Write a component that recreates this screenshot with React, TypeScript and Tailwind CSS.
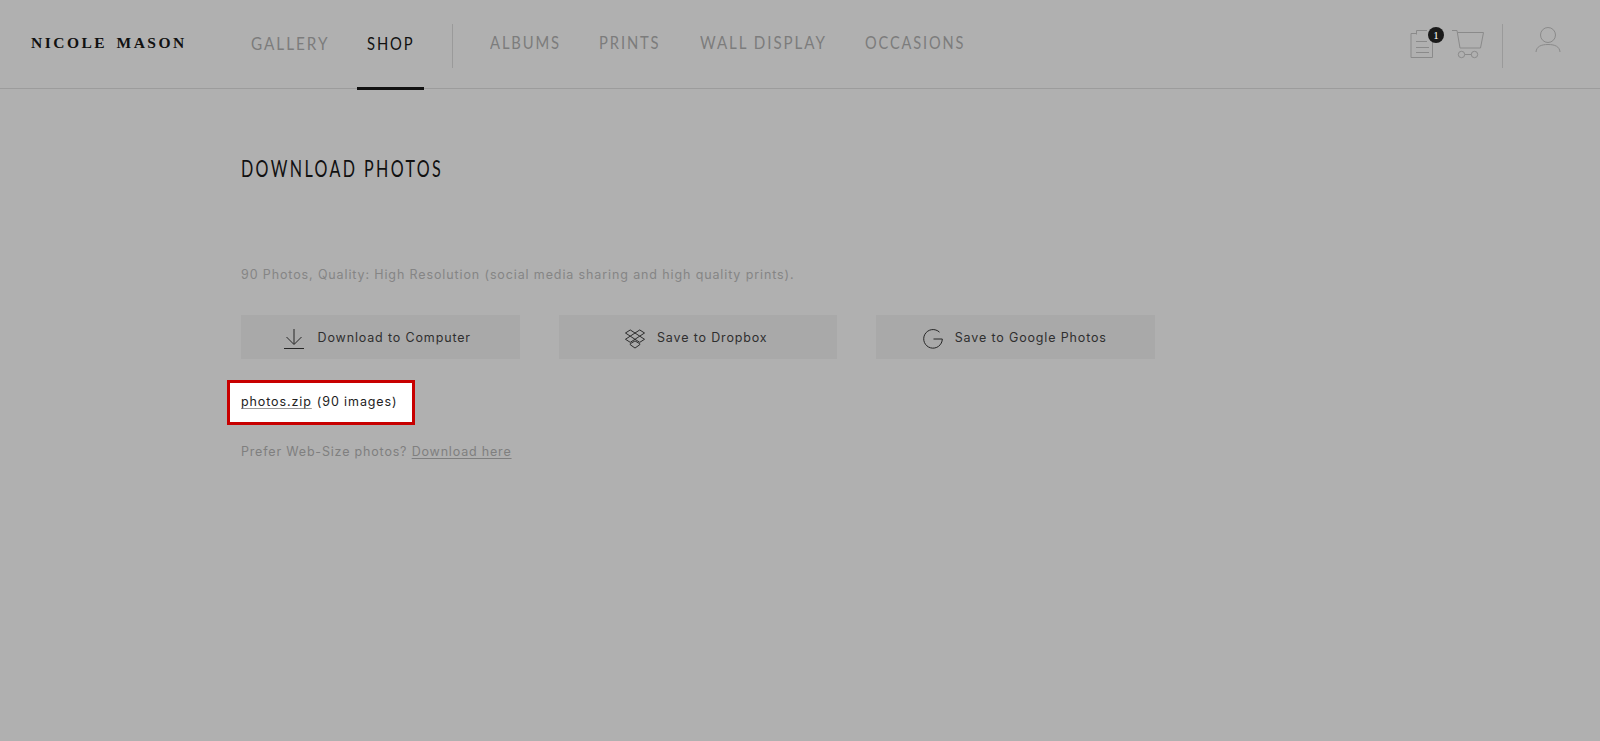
function DocIcon() {
  return (
    <svg width="24" height="30" viewBox="0 0 24 30" fill="none" stroke="#8a8a8a" strokeWidth="1" className="block">
      <path d="M6.500 5.500V1.500H17" />
      <path d="M6.500 4.500H1V28.500H22.500V12" />
      <path d="M6 12.500H17M6 18.500H19M6 23.500H19" />
    </svg>
  );
}

function CartIcon() {
  return (
    <svg width="34" height="30" viewBox="0 0 34 30" fill="none" stroke="#8a8a8a" strokeWidth="1" className="block">
      <path d="M1 1.500H6L9 19H29.500L32.500 3.500H6.500" />
      <circle cx="10.500" cy="25.500" r="3.200" />
      <circle cx="23.500" cy="25.500" r="3.200" />
      <path d="M13.700 25.500H20.300" />
    </svg>
  );
}

function UserIcon() {
  return (
    <svg width="26" height="26" viewBox="0 0 26 26" fill="none" stroke="#8a8a8a" strokeWidth="1" className="block">
      <circle cx="13" cy="8" r="7.500" />
      <path d="M1 25C1.500 19.500 6 17.500 13 17.500S24.500 19.500 25 25" />
    </svg>
  );
}

function DownloadIcon() {
  return (
    <svg width="20" height="22" viewBox="0 0 20 22" fill="none" stroke="#262626" strokeWidth="1" className="block">
      <path d="M10 1V16M2.500 9L10 16.500L17.500 9" />
      <path d="M0 20.500H20" />
    </svg>
  );
}

function DropboxIcon() {
  return (
    <svg width="20" height="20" viewBox="0 0 21 21" fill="none" stroke="#262626" strokeWidth="1" className="block">
      <path d="M5.500 1L10.500 4.200L5.500 7.500L0.500 4.200Z" />
      <path d="M15.500 1L20.500 4.200L15.500 7.500L10.500 4.200Z" />
      <path d="M5.500 7.500L10.500 10.800L5.500 14L0.500 10.800Z" />
      <path d="M15.500 7.500L20.500 10.800L15.500 14L10.500 10.800Z" />
      <path d="M5.500 15.500L10.500 12.500L15.500 15.500V16.500L10.500 20L5.500 16.500Z" />
    </svg>
  );
}

function GoogleIcon() {
  return (
    <svg width="20" height="20" viewBox="0 0 20 20" fill="none" stroke="#262626" strokeWidth="1" className="block">
      <path d="M16.500 3.200A9.300 9.300 0 1 0 19.300 10H10.500" />
    </svg>
  );
}

function SaveButton({ icon, label, cls }: { icon: React.ReactNode; label: string; cls: string }) {
  return (
    <button className={`flex h-11 w-[278.500px] items-center justify-center bg-[#a9a9a9] pt-[3px] text-[12.500px] tracking-[0.85px] text-[#2f2f2f] ${cls}`}>
      {icon}
      {label}
    </button>
  );
}

// no condensed face installed, so the caps get squeezed horizontally
function NavLabel({ label, cls, active }: { label: string; cls: string; active?: boolean }) {
  return (
    <span className={`block origin-left font-['Lato',sans-serif] text-[18px] tracking-[2.3px] whitespace-nowrap ${active ? "text-[#111]" : "text-[#7c7c7c]"} ${cls}`}>
      {label}
    </span>
  );
}

export default function App() {
  return (
    <div className="min-h-[741px] bg-[#b0b0b0] font-['Inter',sans-serif] antialiased">
      {/* Header */}
      <header className="flex h-[89px] items-center border-b border-[#9c9c9c] pl-[31px]">
        <div className="mb-[2px] w-[220px] font-['Liberation_Serif',serif] text-[15.500px] font-bold tracking-[2.5px] whitespace-nowrap text-[#111] [word-spacing:3px]">
          NICOLE MASON
        </div>
        <NavLabel label="GALLERY" cls="mb-[2px] w-[76px] scale-x-[0.85]" />
        <div className="relative ml-[40px] flex h-full items-center">
          <NavLabel label="SHOP" cls="mb-[2px] w-[46px] scale-x-[0.82]" active />
          <div className="absolute -right-[11px] -bottom-[2px] -left-[10px] h-[3px] bg-[#111]" />
        </div>
        <div className="mt-[3px] mr-[37px] ml-[39px] h-11 w-px bg-[#9a9a9a]" />
        <div className="mb-[4px] flex gap-[40px]">
          <NavLabel label="ALBUMS" cls="w-[69px] scale-x-[0.82]" />
          <NavLabel label="PRINTS" cls="w-[61px] scale-x-[0.82]" />
          <NavLabel label="WALL DISPLAY" cls="w-[125px] scale-x-[0.84]" />
          <NavLabel label="OCCASIONS" cls="w-[98px] scale-x-[0.81]" />
        </div>
        <div className="ml-auto flex h-full items-center pr-[39px]">
          <div className="relative">
            <DocIcon />
            <span className="absolute -top-[2px] -right-[10px] flex h-4 w-4 items-center justify-center rounded-full bg-[#1a1a1a] font-['Liberation_Serif',serif] text-[11px] text-white">
              1
            </span>
          </div>
          <div className="ml-[17px]">
            <CartIcon />
          </div>
          <div className="mt-[3px] ml-[17px] h-11 w-px bg-[#9a9a9a]" />
          <div className="mb-[8px] ml-[32px]">
            <UserIcon />
          </div>
        </div>
      </header>

      {/* Content */}
      <main className="pl-[241px]">
        <h1 className="origin-left scale-x-[0.7] pt-[68px] font-['Lato',sans-serif] text-[23px] leading-[22px] tracking-[3.400px] text-[#111]">
          DOWNLOAD PHOTOS
        </h1>
        <p className="pt-[88px] text-[12.500px] leading-4 tracking-[0.88px] text-[#858585]">
          90 Photos, Quality: High Resolution (social media sharing and high quality prints).
        </p>
        <div className="flex gap-[39px] pt-[32px]">
          <SaveButton icon={<DownloadIcon />} label="Download to Computer" cls="gap-[14px] pr-[6px]" />
          <SaveButton icon={<DropboxIcon />} label="Save to Dropbox" cls="gap-[12px] pr-[3px]" />
          <SaveButton icon={<GoogleIcon />} label="Save to Google Photos" cls="gap-[12px] pr-[1px]" />
        </div>
        <div className="relative mt-[21px] -ml-[14px] flex h-[45px] w-[188px] items-center border-[3px] border-[#c80000] bg-white pl-[11px] text-[12.500px] tracking-[0.9px] whitespace-nowrap text-[#222]">
          <span className="underline decoration-[#999] underline-offset-2">photos.zip</span>
          <span className="ml-[5px]">(90 images)</span>
        </div>
        <p className="pt-[19px] text-[12.500px] leading-4 tracking-[0.82px] text-[#7f7f7f]">
          Prefer Web-Size photos? <span className="underline underline-offset-2">Download here</span>
        </p>
      </main>
    </div>
  );
}
